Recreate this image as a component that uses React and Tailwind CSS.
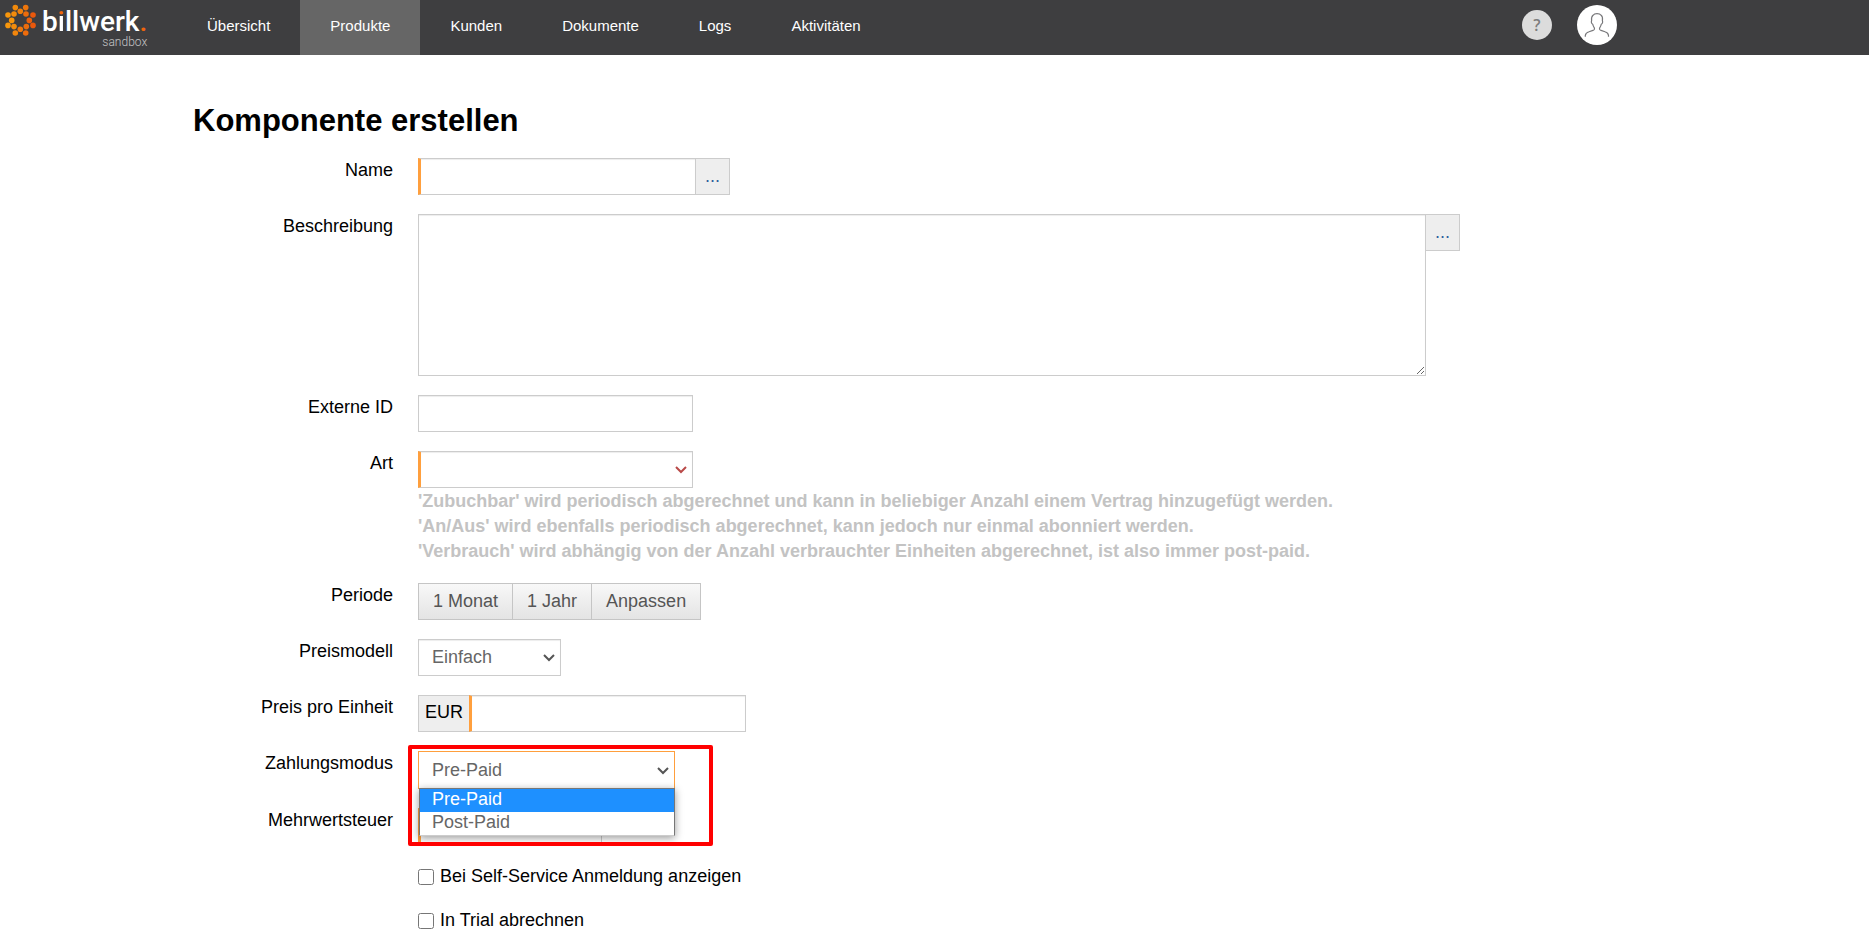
import React, { useState } from 'react'

const NAV_ITEMS = ['Übersicht', 'Produkte', 'Kunden', 'Dokumente', 'Logs', 'Aktivitäten']

const LOGO_DOTS = [
  [15.3, 7.6, '#f18a0c'], [25.7, 7.6, '#ee760c'], [20.3, 11.3, '#ef800c'],
  [8, 15, '#f7960c'], [14, 14, '#f38c0c'], [26, 14, '#ec6c0c'], [33, 15, '#ea580c'],
  [11.7, 20.4, '#f7960c'], [29.3, 20.4, '#ea600c'],
  [8, 25.4, '#f7960c'], [14, 26.6, '#f38c0c'], [26.3, 26.6, '#ec6c0c'], [33, 25.4, '#ea580c'],
  [20.3, 29.3, '#ef780c'], [15.3, 33, '#f3860c'], [25.7, 33, '#ee6c0c'],
]

const Logo = () => (
  <a href="#" className="flex w-[147px] items-start">
    <svg viewBox="0 0 42 42" className="h-[42px] w-[42px] shrink-0">
      {LOGO_DOTS.map(([x, y, color]) => (
        <circle key={`${x}-${y}`} cx={x} cy={y} r="2.8" fill={color} />
      ))}
    </svg>
    <span className="flex flex-col items-end font-['Roboto',sans-serif] text-white">
      <span className="pt-2 text-[28px] leading-7 font-medium">
        b<span className="bg-linear-to-b from-[#f0640c] from-30% to-white to-30% bg-clip-text text-transparent">i</span>llwerk<span className="text-[#f0640c]">.</span>
      </span>
      <span className="text-xs leading-3 font-light text-[#c5c5c6]">sandbox</span>
    </span>
  </a>
)

const Header = () => (
  <header className="bg-[#3e3e40] text-[15px] text-white">
    <div className="flex h-[55px] max-w-[1617px] items-start justify-between">
      <div className="flex">
        <Logo />
        <nav className="ml-[30px] flex">
          {NAV_ITEMS.map((item) => (
            <a
              key={item}
              href="#"
              className={`h-[55px] px-[30px] pt-4 leading-5 ${item === 'Produkte' ? 'bg-[#666666]' : ''}`}
            >
              {item}
            </a>
          ))}
        </nav>
      </div>
      <div className="flex items-center gap-[25px] pt-[5px]">
        <button type="button" className="h-[30px] w-[30px] rounded-full bg-[#dcdcdc] font-['Open_Sans',sans-serif] text-base leading-[30px] font-semibold text-[#7d7d7d]">?</button>
        <button type="button" aria-label="Profil" className="h-10 w-10 rounded-full bg-white">
          <svg viewBox="0 0 40 40" className="h-10 w-10" fill="none" stroke="#77777a" strokeWidth="1.2" strokeLinejoin="round">
            <path d="M8.300 31.700V30.500C8.500 28.500 10 27.300 12 26.700L16 25.400C17.500 24.900 17.700 24 17.300 22.800C16.500 21.800 16 20.500 15.700 19.200C14.600 18.800 14 17.200 14.600 15.800C14.300 13.500 14.500 11.500 16 10.300C17 9 18.500 8.700 20 8.700C21.800 8.700 23.300 9.200 24.200 10.300C25.700 11.500 25.700 13.500 25.400 15.800C26 17.200 25.400 18.800 24.300 19.200C24 20.500 23.500 21.800 22.700 22.800C22.300 24 22.500 24.900 24 25.400L28 26.700C30 27.300 31.300 28.500 31.500 30.500V31.700" />
          </svg>
        </button>
      </div>
    </div>
  </header>
)

const Row = ({ label, htmlFor, children }) => (
  <div className="mb-[19px] flex items-start gap-[25px]">
    <label htmlFor={htmlFor} className="w-[200px] shrink-0 text-right">{label}</label>
    <div className="min-w-0 flex-1">{children}</div>
  </div>
)

const inputStyle = 'border border-[#cccccc] bg-white px-[13px] text-[#666666] shadow-[inset_0_1px_1px_rgba(0,0,0,0.075)] outline-none'
const requiredStyle = 'border-l-[3px] border-l-[#ff9f3d]'

const Select = ({ className, arrow = '#555555', children, ...props }) => (
  <span className="relative inline-flex align-top">
    <select className={`h-[37px] appearance-none ${inputStyle} ${className}`} {...props}>{children}</select>
    <svg viewBox="0 0 12 8" className="pointer-events-none absolute top-[15px] right-[6px] h-2 w-3" fill="none" stroke={arrow} strokeWidth="2">
      <path d="M1 1l5 5 5-5" />
    </svg>
  </span>
)

const MoreButton = ({ label }) => (
  <button type="button" aria-label={label} className="h-[37px] w-[34px] shrink-0 border border-l-0 border-[#cccccc] bg-[#eeeeee] text-[#2f5f9f]">...</button>
)

const App = () => {
  const [mode, setMode] = useState('Pre-Paid')
  const [open, setOpen] = useState(true)

  const selectMode = (value) => {
    setMode(value)
    setOpen(false)
  }

  return (
    <div className="min-h-screen bg-white font-['Liberation_Sans',Arial,sans-serif] text-lg leading-[25px] text-black">
      <Header />
      <main className="max-w-[1460px] pt-[46px] pl-[193px]">
        <h1 className="mb-[17px] text-[31px] leading-10 font-bold">Komponente erstellen</h1>
        <form>
          <Row label="Name" htmlFor="name">
            <div className="flex">
              <input id="name" type="text" className={`h-[37px] w-[278px] ${inputStyle} ${requiredStyle}`} />
              <MoreButton label="Name übersetzen" />
            </div>
          </Row>
          <Row label="Beschreibung" htmlFor="description">
            <div className="flex items-start">
              <textarea id="description" className={`h-[162px] min-w-0 flex-1 ${inputStyle}`} />
              <MoreButton label="Beschreibung übersetzen" />
            </div>
          </Row>
          <Row label="Externe ID" htmlFor="externalId">
            <input id="externalId" type="text" className={`block h-[37px] w-[275px] ${inputStyle}`} />
          </Row>
          <Row label="Art" htmlFor="type">
            <Select id="type" className={`w-[275px] ${requiredStyle}`} arrow="#b94a48">
              <option></option>
            </Select>
            <p className="pt-px font-bold text-[#c3c3c3]">
              'Zubuchbar' wird periodisch abgerechnet und kann in beliebiger Anzahl einem Vertrag hinzugefügt werden.<br />
              'An/Aus' wird ebenfalls periodisch abgerechnet, kann jedoch nur einmal abonniert werden.<br />
              'Verbrauch' wird abhängig von der Anzahl verbrauchter Einheiten abgerechnet, ist also immer post-paid.
            </p>
          </Row>
          <Row label="Periode">
            <div className="flex">
              {['1 Monat', '1 Jahr', 'Anpassen'].map((period) => (
                <button
                  key={period}
                  type="button"
                  className="h-[37px] border border-r-0 border-[#c5c5c5] bg-linear-to-b from-[#f8f8f8] to-[#e4e4e4] px-[14px] text-[#555555] last:border-r"
                >
                  {period}
                </button>
              ))}
            </div>
          </Row>
          <Row label="Preismodell" htmlFor="priceModel">
            <Select id="priceModel" className="w-[143px]">
              <option>Einfach</option>
            </Select>
          </Row>
          <Row label="Preis pro Einheit" htmlFor="price">
            <div className="flex">
              <span className="w-[51px] border border-r-0 border-[#cccccc] bg-[#eeeeee] pt-1 text-center">EUR</span>
              <input id="price" type="text" className={`h-[37px] w-[277px] ${inputStyle} ${requiredStyle}`} />
            </div>
          </Row>
          <Row label="Zahlungsmodus" htmlFor="paymentMode">
            <div className="relative">
              <button
                id="paymentMode"
                type="button"
                onClick={() => setOpen(!open)}
                className="relative block h-[38px] w-[257px] border border-[#ff9f3d] bg-white px-[13px] text-left text-[#666666]"
              >
                {mode}
                <svg viewBox="0 0 12 8" className="absolute top-[15px] right-[5px] h-2 w-3" fill="none" stroke="#555555" strokeWidth="2">
                  <path d="M1 1l5 5 5-5" />
                </svg>
              </button>
              {open && (
                <ul className="absolute top-[37px] left-px z-10 w-64 border border-[#767676] border-b-[#cccccc] bg-white leading-5 text-[#666666] shadow-[0_2px_8px_rgba(0,0,0,0.4)]">
                  {['Pre-Paid', 'Post-Paid'].map((option) => (
                    <li
                      key={option}
                      onClick={() => selectMode(option)}
                      className={`h-[23px] px-3 ${option === mode ? 'bg-[#1e90ff] text-white' : ''}`}
                    >
                      {option}
                    </li>
                  ))}
                </ul>
              )}
              <div className="pointer-events-none absolute -top-[6px] -left-[10px] z-20 h-[101px] w-[305px] rounded-xs border-4 border-[#ff0000]"></div>
            </div>
          </Row>
          <Row label="Mehrwertsteuer" htmlFor="tax">
            <select id="tax" className={`block h-[37px] w-[184px] appearance-none ${inputStyle} ${requiredStyle}`}>
              <option></option>
            </select>
          </Row>
          {['Bei Self-Service Anmeldung anzeigen', 'In Trial abrechnen'].map((text) => (
            <label key={text} className="mb-[19px] ml-[225px] flex items-center gap-[6px]">
              <input type="checkbox" className="h-4 w-4" />
              {text}
            </label>
          ))}
        </form>
      </main>
    </div>
  )
}

export default App
